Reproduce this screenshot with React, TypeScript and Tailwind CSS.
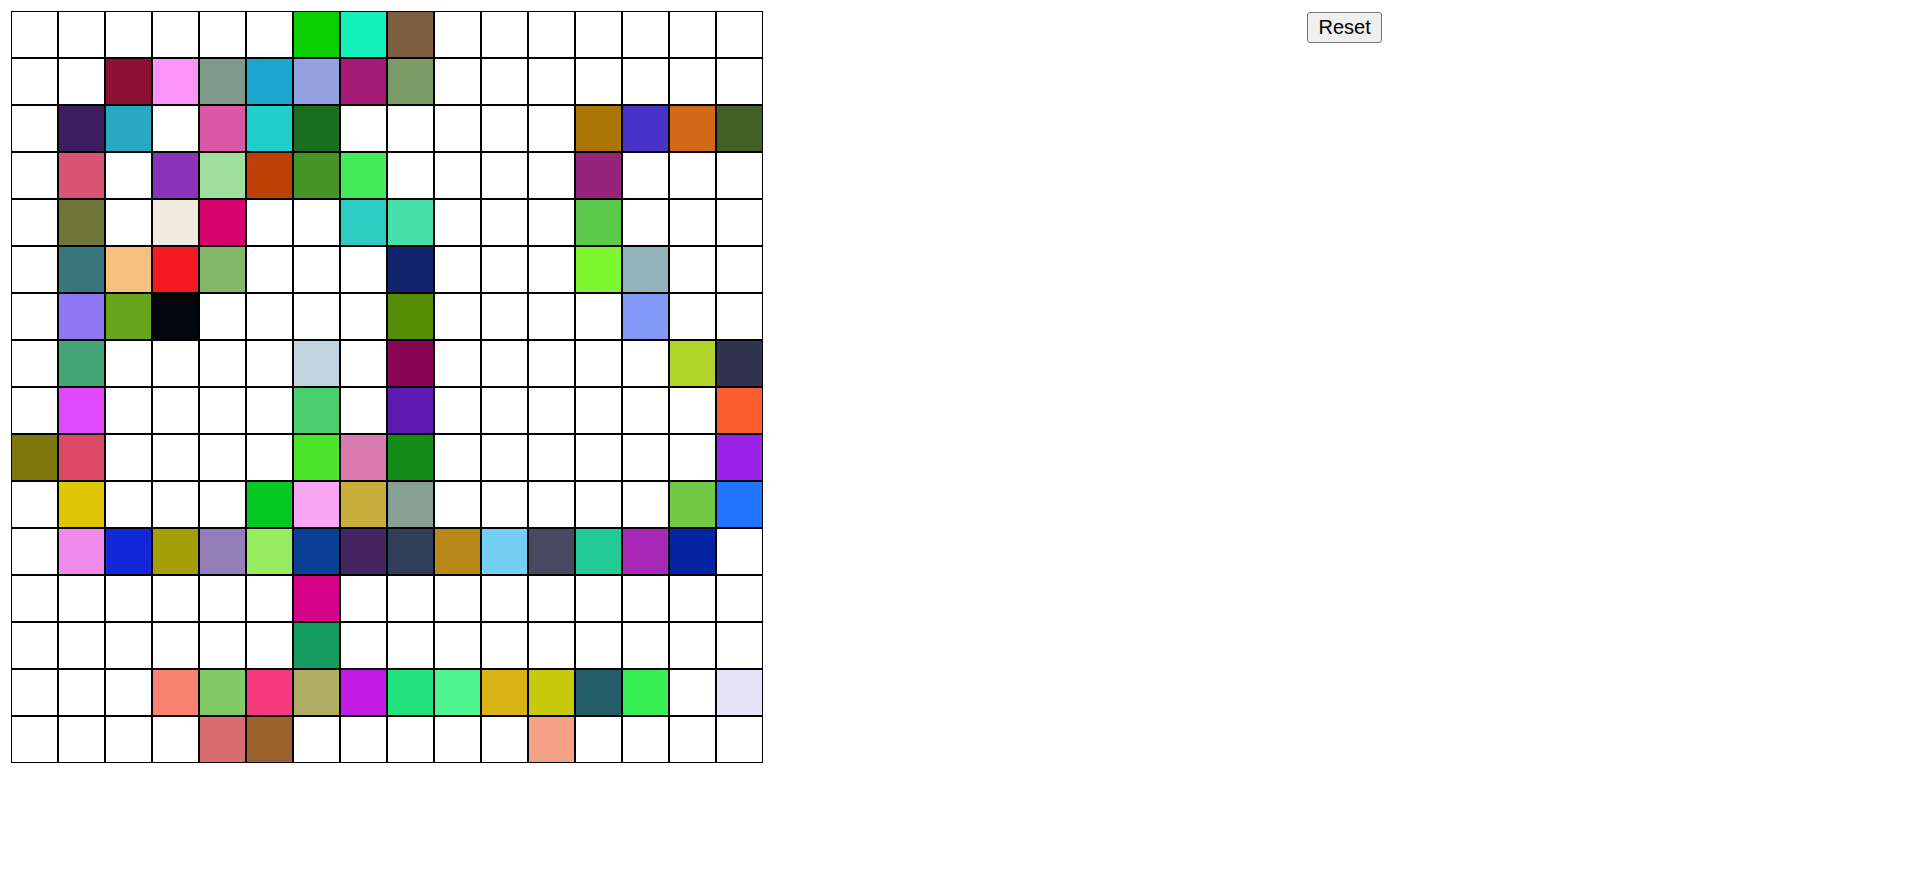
import { useState } from 'react';

const W = '';

// 16x16 board, '' = empty cell
const initialBoard: string[][] = [
  [W, W, W, W, W, W, '#0acf00', '#14f2bc', '#7d5f40', W, W, W, W, W, W, W],
  [W, W, '#8c1133', '#fc95fb', '#7f9a8b', '#1aa7ce', '#95a0e0', '#a61b76', '#7a9c66', W, W, W, W, W, W, W],
  [W, '#3d1d5f', '#29a8c3', W, '#db57a7', '#1ecfcc', '#1a6e1f', W, W, W, W, W, '#aa7706', '#4a33c8', '#d26918', '#426126'],
  [W, '#d95473', W, '#8d32ba', '#9ddf9b', '#bd4004', '#469326', '#42ec5a', W, W, W, W, '#95257b', W, W, W],
  [W, '#6e7539', W, '#f0eadf', '#d8026d', W, W, '#2ecbc0', '#45dfa9', W, W, W, '#5cc84c', W, W, W],
  [W, '#38777c', '#f8c07f', '#f61a20', '#85b76a', W, W, W, '#10246e', W, W, W, '#80f531', '#92b3b9', W, W],
  [W, '#8f77f3', '#67a51c', '#02070b', W, W, W, W, '#558e04', W, W, W, W, '#8399f6', W, W],
  [W, '#45a577', W, W, W, W, '#c0d5e0', W, '#8a0455', W, W, W, W, W, '#b0d62c', '#30344e'],
  [W, '#e04afc', W, W, W, W, '#4bcf6d', W, '#5f1bb1', W, W, W, W, W, W, '#fc5d2e'],
  ['#7e770c', '#dd4a66', W, W, W, W, '#4be42b', '#da7bb0', '#148c1a', W, W, W, W, W, W, '#9a23e8'],
  [W, '#dfc707', W, W, W, '#05c822', '#f9a7f4', '#c9ae3b', '#879f95', W, W, W, W, W, '#70c942', '#2074fe'],
  [W, '#ef8bec', '#1228d8', '#a59f07', '#947eb7', '#95ec5f', '#0a4094', '#462561', '#313e59', '#b9871a', '#76cff2', '#474a60', '#23cc97', '#a728b4', '#0524a1', W],
  [W, W, W, W, W, W, '#d5038a', W, W, W, W, W, W, W, W, W],
  [W, W, W, W, W, W, '#159c60', W, W, W, W, W, W, W, W, W],
  [W, W, W, '#f8816f', '#81ca64', '#f7397d', '#b0ae63', '#c31be4', '#21e27c', '#4df48f', '#dab315', '#c7ca0c', '#235d68', '#37ef52', W, '#e6e3f8'],
  [W, W, W, W, '#d96c6f', '#9b622e', W, W, W, W, W, '#f4a286', W, W, W, W],
];

const randomColor = () =>
  '#' + Math.floor(Math.random() * 0xffffff).toString(16).padStart(6, '0');

export default function App() {
  const [board, setBoard] = useState(initialBoard);

  const paint = (r: number, c: number) => {
    setBoard((b) => b.map((row, i) => (i === r ? row.map((v, j) => (j === c ? (v ? W : randomColor()) : v)) : row)));
  };

  const reset = () => setBoard(initialBoard.map(() => Array(16).fill(W)));

  return (
    <div className="flex items-start pl-[11px] pt-[11px] min-h-screen bg-white">
      <div className="grid grid-cols-[repeat(16,47px)] grid-rows-[repeat(16,47px)]">
        {board.map((row, r) =>
          row.map((color, c) => (
            <div
              key={`${r}-${c}`}
              onClick={() => paint(r, c)}
              className="border border-black bg-white"
              style={color ? { backgroundColor: color } : undefined}
            />
          ))
        )}
      </div>
      <button
        onClick={reset}
        className="ml-[544px] mt-px px-[10.5px] py-[3px] border border-[#767676] rounded-[3px] bg-[#efefef] text-black text-[20px] leading-[23px] font-['Liberation_Sans',Arial,sans-serif]"
      >
        Reset
      </button>
    </div>
  );
}
